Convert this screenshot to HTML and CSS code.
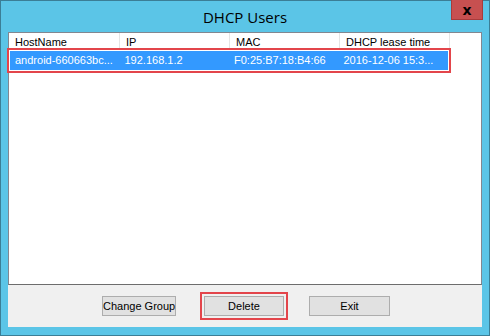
FILE: index.html
```html
<!DOCTYPE html>
<html lang="en">
<head>
    <meta charset="UTF-8">
    <title>DHCP Users</title>
    <link rel="stylesheet" href="styles.css">
</head>
<body>
    <div class="window">
        <div class="titlebar">
            <span class="title">DHCP Users</span>
            <button class="close-btn">x</button>
        </div>

        <div class="client">
            <div class="list">
                <div class="list-header">
                    <div class="col col-host">HostName</div>
                    <div class="col col-ip">IP</div>
                    <div class="col col-mac">MAC</div>
                    <div class="col col-time">DHCP lease time</div>
                </div>
                <div class="list-row selected">
                    <div class="col col-host">android-660663bc...</div>
                    <div class="col col-ip">192.168.1.2</div>
                    <div class="col col-mac">F0:25:B7:18:B4:66</div>
                    <div class="col col-time">2016-12-06 15:3...</div>
                </div>
            </div>

            <div class="button-bar">
                <button class="btn btn-group">Change Group</button>
                <button class="btn btn-delete marked">Delete</button>
                <button class="btn btn-exit">Exit</button>
            </div>
        </div>
    </div>
</body>
</html>
```

FILE: styles.css
```css
* {
    margin: 0;
    padding: 0;
    box-sizing: border-box;
}

body {
    font-family: 'Liberation Sans', Arial, sans-serif;
    font-size: 11px;
    color: #000;
    background: #fff;
}

.window {
    width: 490px;
    height: 336px;
    background: #5bc5e7;
    border: 1px solid #3b7e96;
    display: flex;
    flex-direction: column;
}

.titlebar {
    position: relative;
    height: 31px;
    display: flex;
    align-items: center;
    justify-content: center;
}

.title {
    font-family: 'Open Sans', 'Noto Sans', sans-serif;
    font-size: 15px;
    color: #000;
    margin-top: 1px;
}

.close-btn {
    position: absolute;
    top: -1px;
    right: 6px;
    width: 32px;
    height: 20px;
    background: #c75050;
    border: none;
    border-left: 1px solid #a83b3b;
    border-right: 1px solid #a83b3b;
    border-bottom: 1px solid #a83b3b;
    color: #000;
    font-family: 'DejaVu Sans', sans-serif;
    font-size: 14px;
    font-weight: bold;
    line-height: 16px;
}

.client {
    margin: 0 7px 0 7px;
    display: flex;
    flex-direction: column;
}

.list {
    height: 253px;
    background: #fff;
    border: 1px solid #828790;
    border-bottom-color: #6d6d6d;
}

.list-header {
    display: flex;
    height: 17px;
}

.list-header .col {
    border-right: 1px solid #e5e5e5;
    padding-left: 6px;
    line-height: 18px;
}

.col-host { width: 111px; }
.col-ip { width: 110px; }
.col-mac { width: 110px; }
.col-time { width: 110px; }

.list-row {
    display: flex;
    margin: 1px 0 0 1px;
    width: 438px;
    height: 19px;
    line-height: 19px;
}

.list-row .col {
    padding-left: 5px;
    white-space: nowrap;
    overflow: hidden;
}

.list-row .col-host { width: 110px; }

.list-row.selected {
    background: #3399ff;
    color: #fff;
    outline: 2px solid #e3454b;
    outline-offset: 1px;
}

.button-bar {
    height: 42px;
    background: #f0f0f0;
    display: flex;
    align-items: center;
    padding-left: 94px;
}

.btn {
    height: 20px;
    padding: 0;
    white-space: nowrap;
    background: #e1e1e1;
    border: 1px solid #adadad;
    font-family: 'Liberation Sans', Arial, sans-serif;
    font-size: 11px;
    color: #000;
}

.btn-group { width: 74px; }
.btn-delete { width: 80px; margin-left: 28px; }
.btn-exit { width: 81px; margin-left: 25px; }

.btn.marked {
    outline: 2px solid #e3454b;
    outline-offset: 2px;
}
```
